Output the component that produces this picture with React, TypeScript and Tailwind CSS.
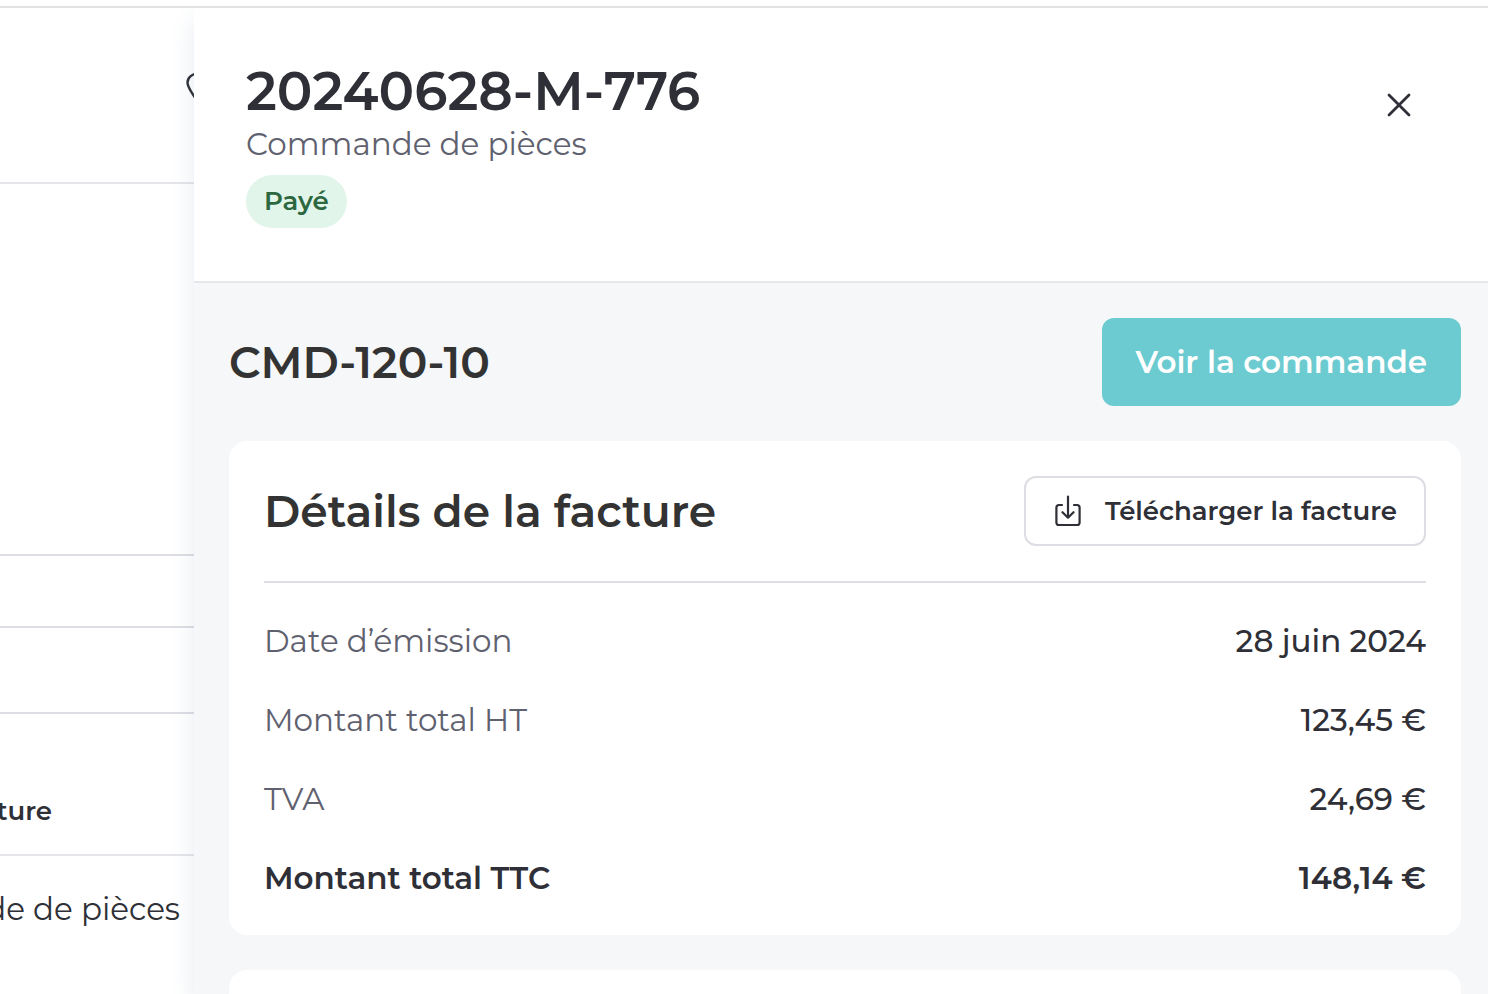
import React from 'react';

const amounts = [
  { label: 'Date d’émission', value: '28 juin 2024' },
  { label: 'Montant total HT', value: '123,45 €' },
  { label: 'TVA', value: '24,69 €' },
  { label: 'Montant total TTC', value: '148,14 €', total: true },
];

function CloseIcon() {
  return (
    <svg className="h-6 w-6" viewBox="0 0 24 24" fill="none" stroke="currentColor" strokeWidth="2.8" strokeLinecap="round" aria-hidden="true">
      <path d="M2 2 22 22M22 2 2 22" />
    </svg>
  );
}

function DownloadIcon() {
  return (
    <svg className="h-8 w-7" viewBox="0 0 28 32" fill="none" stroke="currentColor" strokeWidth="2.2" strokeLinecap="round" strokeLinejoin="round" aria-hidden="true">
      <path d="M9 10H6a2.600 2.600 0 0 0-2.600 2.600v14.800A2.600 2.600 0 0 0 6 30h18a2.600 2.600 0 0 0 2.600-2.600V12.600A2.600 2.600 0 0 0 24 10h-3" />
      <path d="M15 1.500v21M9.500 17.200l5.500 5.500 5.500-5.500" />
    </svg>
  );
}

function PinIcon() {
  return (
    <svg className="h-8 w-6 shrink-0" viewBox="0 0 24 32" fill="none" stroke="currentColor" strokeWidth="2.4" aria-hidden="true">
      <path d="M12 29C8.500 25.500 1.500 15 1.500 10.500 1.500 5.500 6.500 1.600 12 1.600s10.500 3.900 10.500 8.900C22.500 15 15.500 25.500 12 29Z" />
    </svg>
  );
}

function InvoiceList() {
  return (
    <main className="w-[194px] shrink-0 overflow-hidden">
      <div className="flex h-[176px] border-b-2 border-[#e5e6e9] pt-[64px] pl-[186px]">
        <PinIcon />
      </div>
      <div className="h-[372px] border-b-2 border-[#dddde3]" />
      <div className="h-[72px] border-b-2 border-[#dddde3]" />
      <div className="h-[86px] border-b-2 border-[#dddde3]" />
      <table className="w-full table-fixed">
        <thead>
          <tr className="border-b-2 border-[#e5e6e9]">
            <th className="h-[141px] p-0 pt-[53px]">
              <div className="flex w-[52px] justify-end overflow-hidden text-[26px] leading-9 font-semibold">Facture</div>
            </th>
          </tr>
        </thead>
        <tbody>
          <tr>
            <td className="h-[107px] p-0">
              <div className="flex w-[180px] justify-end overflow-hidden text-[31px] leading-[44px] whitespace-nowrap">
                Commande de pièces
              </div>
            </td>
          </tr>
        </tbody>
      </table>
    </main>
  );
}

function DrawerHeader() {
  return (
    <header className="flex h-[275px] items-start justify-between border-b-2 border-[#e5e7ea] bg-white pt-[51px] pr-[72px] pl-[52px]">
      <div>
        <h1 className="text-[53px] leading-[64px] font-semibold">20240628-M-776</h1>
        <p className="text-[31px] leading-[42px] text-[#60616f]">Commande de pièces</p>
        <span className="mt-[10px] inline-block rounded-full bg-[#e2f5ea] px-[18px] text-[26px] leading-[53px] font-semibold text-[#2d673f]">
          Payé
        </span>
      </div>
      <button type="button" aria-label="Fermer" className="mt-[29px] p-[5px]">
        <CloseIcon />
      </button>
    </header>
  );
}

function InvoiceCard() {
  return (
    <section className="rounded-[18px] bg-white p-[35px]">
      <div className="flex items-center justify-between border-b-2 border-[#dddde3] pb-[35px]">
        <h3 className="text-[44px] leading-[70px] font-semibold text-[#333333]">Détails de la facture</h3>
        <button
          type="button"
          className="flex h-[70px] items-center gap-6 rounded-xl border-2 border-[#dddde3] px-[27px] text-[26px] font-semibold"
        >
          <DownloadIcon />
          Télécharger la facture
        </button>
      </div>
      <dl className="flex flex-col gap-[35px] pt-9 text-[31px] leading-[44px]">
        {amounts.map(({ label, value, total }) => (
          <div key={label} className="flex justify-between">
            <dt className={total ? 'font-semibold' : 'text-[#60616f]'}>{label}</dt>
            <dd className={total ? 'font-semibold' : 'font-medium'}>{value}</dd>
          </div>
        ))}
      </dl>
    </section>
  );
}

export default function App() {
  return (
    <div className="flex min-h-screen flex-col bg-white font-[Montserrat,Inter,sans-serif] text-[#2f3037]">
      <div className="h-2 border-b-2 border-[#e2e2e2]" />
      <div className="flex flex-1 overflow-hidden">
        <InvoiceList />
        <aside className="relative flex flex-1 flex-col shadow-[0_12px_22px_rgba(80,110,160,0.14)]">
          <DrawerHeader />
          <div className="flex flex-1 flex-col bg-[#f5f7f9] pt-[35px] pr-[27px] pl-[35px]">
            <div className="mb-[35px] flex items-center justify-between">
              <h2 className="text-[44px] leading-[58px] font-semibold text-[#333333]">CMD-120-10</h2>
              <button type="button" className="h-[88px] rounded-xl bg-[#6ccbd0] px-[34px] text-[31px] font-semibold text-white">
                Voir la commande
              </button>
            </div>
            <InvoiceCard />
            <section className="mt-[35px] flex-1 rounded-t-[18px] bg-white" />
          </div>
        </aside>
      </div>
    </div>
  );
}
